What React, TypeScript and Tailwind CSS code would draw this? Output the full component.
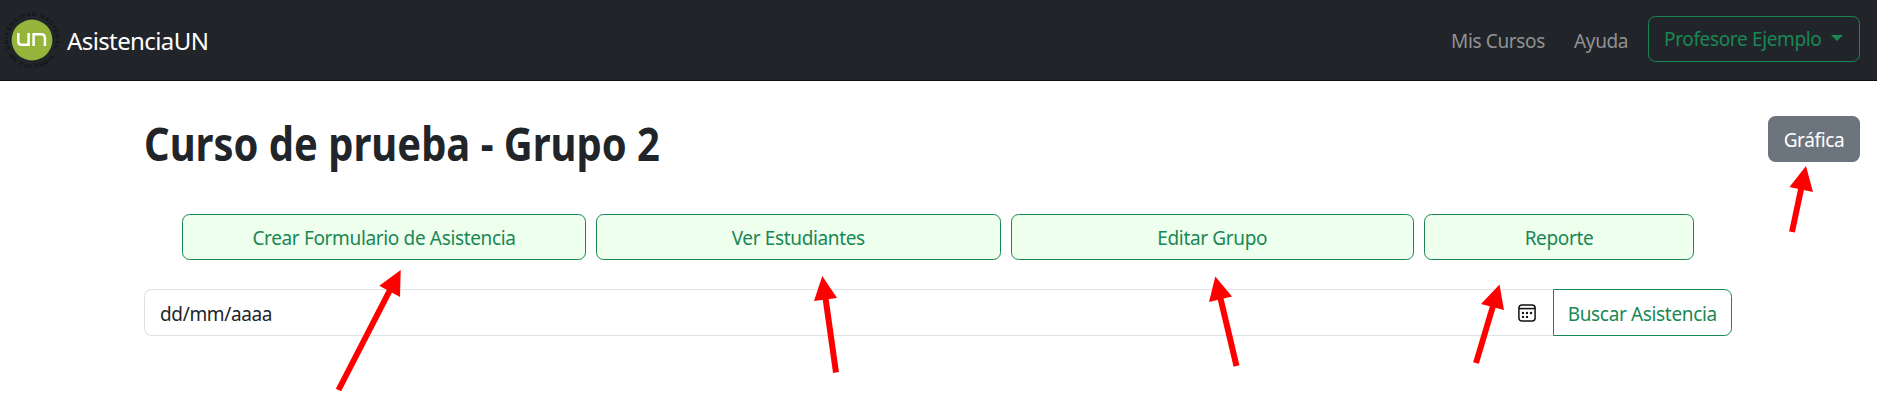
import React from "react";

const BUTTON =
  "flex h-[46px] items-center justify-center rounded-[7.5px] border border-[#198754] bg-[#eeffee] pt-[3px] text-[#198754]";

function Logo() {
  return (
    <svg className="mb-[1px] h-[62px] w-[62px] shrink-0" viewBox="0 0 62 62">
      <defs>
        <path id="ringTop" d="M9.75 40 A24 24 0 1 1 54.25 40" />
        <path id="ringBottom" d="M9 47 A28 28 0 0 0 55 47" />
      </defs>
      <circle cx="32" cy="31" r="20.4" fill="#94b43b" />
      <g fill="none" stroke="#fff" strokeWidth="2.5">
        <path d="M18.3 24v8.4q0 3.3 3.3 3.3h7V24" />
        <path d="M33.6 37V25.3h7.5q3.8 0 3.8 3.8V37" />
      </g>
      <g fill="#0f1214" className="font-['Liberation_Sans'] text-[5.5px] font-bold tracking-[0px]">
        <text>
          <textPath href="#ringTop" textLength="93">UNIVERSIDAD NACIONAL</textPath>
        </text>
        <text>
          <textPath href="#ringBottom" textLength="53">DE COLOMBIA</textPath>
        </text>
      </g>
    </svg>
  );
}

function CalendarIcon() {
  return (
    <svg className="h-[18px] w-[18px]" viewBox="0 0 18 18" fill="none" stroke="#111">
      <rect x="0.9" y="0.9" width="16.2" height="16.2" rx="3" strokeWidth="1.5" />
      <path d="M1 4.6h16" strokeWidth="1.5" />
      <g fill="#111" stroke="none">
        <circle cx="5" cy="9" r="1.2" />
        <circle cx="9" cy="9" r="1.2" />
        <circle cx="13" cy="9" r="1.2" />
        <circle cx="5" cy="12.9" r="1.2" />
        <circle cx="9" cy="12.9" r="1.2" />
      </g>
    </svg>
  );
}

const ARROWS = [
  { head: "1806,166 1789.5,187 1813,192", line: "M1801.3 188L1792 232" },
  { head: "400.7,270 379.3,285.7 400,297", line: "M390 290L338.5 390" },
  { head: "822.3,276 814,301 837,298", line: "M825.5 298L836 372.5" },
  { head: "1215.3,276.5 1209,302 1232,296.5", line: "M1220.4 298L1236.5 366" },
  { head: "1499.5,284.5 1481,304 1504,310", line: "M1493 306L1476 363" },
];

function Arrows() {
  return (
    <svg className="pointer-events-none absolute inset-0" width="1877" height="419" viewBox="0 0 1877 419">
      {ARROWS.map((a) => (
        <g key={a.line}>
          <path d={a.line} stroke="#f00" strokeWidth="6" />
          <polygon points={a.head} fill="#f00" />
        </g>
      ))}
    </svg>
  );
}

export default function App() {
  return (
    <div className="relative h-[419px] w-[1877px] overflow-hidden bg-white font-['Noto_Sans',sans-serif] text-[19px] tracking-[-0.35px] text-[#212529]">
      <header className="flex h-[81px] items-center border-b border-[#0c0e10] bg-[#212529] pr-[17px]">
        <Logo />
        <span className="ml-[5px] pt-[2px] text-[24px] tracking-[-0.6px] text-white">AsistenciaUN</span>
        <nav className="ml-auto flex items-center text-[#909294]">
          <span className="mr-[29px] mt-[3px] w-[94px] whitespace-nowrap">Mis Cursos</span>
          <span className="mr-[20px] mt-[3px] w-[54px]">Ayuda</span>
          <button className="mb-[2px] flex h-[46px] w-[212px] items-center whitespace-nowrap rounded-[7.5px] border border-[#198754] pl-[15px] text-[#198754]">
            <span className="w-[167px] pt-px text-left">Profesore Ejemplo</span>
            <svg className="mb-[2px] h-[6px] w-[12px]" viewBox="0 0 12 6">
              <path d="M0 0h12L6 6z" fill="#198754" />
            </svg>
          </button>
        </nav>
      </header>
      <main className="flex pl-[144px] pr-[17px] pt-[34px]">
        <div className="w-[1588px]">
          <h1 className="mt-[-3px] h-[64px] whitespace-nowrap text-[46px] font-bold leading-[63px] tracking-[0px]">
            <span className="inline-block origin-left scale-x-[0.868]">Curso de prueba - Grupo 2</span>
          </h1>
          <div className="mt-[38px] flex gap-[10px] pl-[38px]">
            <button className={`${BUTTON} w-[404px]`}>Crear Formulario de Asistencia</button>
            <button className={`${BUTTON} w-[404.5px]`}>Ver Estudiantes</button>
            <button className={`${BUTTON} w-[403.5px]`}>Editar Grupo</button>
            <button className={`${BUTTON} w-[270px]`}>Reporte</button>
          </div>
          <div className="mt-[29px] flex h-[47px]">
            <div className="flex flex-1 items-center justify-between rounded-l-[7.5px] border border-r-0 border-[#dee2e6] pl-[15px] pr-[17px]">
              <span className="pt-[4px]">dd/mm/aaaa</span>
              <CalendarIcon />
            </div>
            <button className="w-[179.5px] rounded-r-[7.5px] border border-[#198754] pt-[4px] text-[#198754]">
              Buscar Asistencia
            </button>
          </div>
        </div>
        <button className="ml-auto mt-px h-[46px] w-[92px] rounded-[7.5px] bg-[#6c757d] pt-[2px] text-white">
          Gráfica
        </button>
      </main>
      <Arrows />
    </div>
  );
}
